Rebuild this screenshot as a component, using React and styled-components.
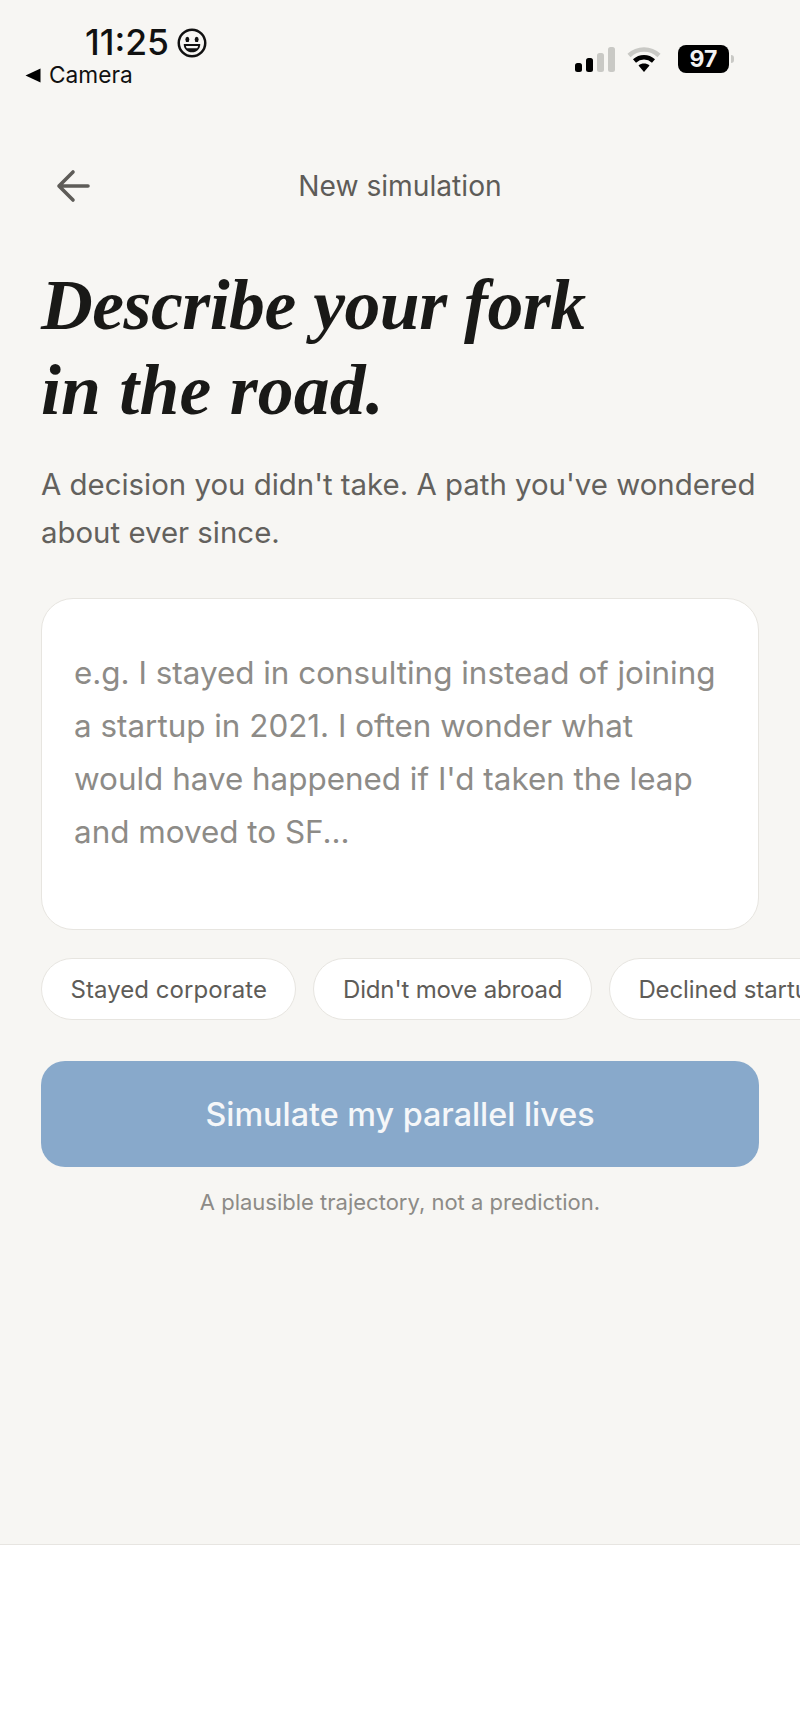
import React from "react";
import styled, { createGlobalStyle } from "styled-components";

const Global = createGlobalStyle`
  html, body { margin: 0; padding: 0; background: #fff; }
  * { box-sizing: border-box; }
`;
const SANS = `"Inter", "Liberation Sans", sans-serif`;

const Page = styled.div`
  width: 800px; height: 1734px; overflow: hidden;
  display: flex; flex-direction: column;
  font-family: ${SANS};
`;
const Screen = styled.main`
  height: 1545px; background: #f7f6f3;
  border-bottom: 1px solid #e7e5e1;
  display: flex; flex-direction: column;
`;
const Footer = styled.div`flex: 1; background: #fff;`;

const StatusBar = styled.header`
  height: 151px; padding: 26px 71px 0 25px;
  display: flex; justify-content: space-between; align-items: flex-start;
`;
const StatusLeft = styled.div`display: flex; flex-direction: column;`;
const TimeRow = styled.div`
  display: flex; align-items: center; gap: 8px; padding-left: 60px; height: 34px;
`;
const Time = styled.span`font-size: 35.5px; font-weight: 500; color: #111; line-height: 34px;`;
const BackRow = styled.div`
  display: flex; align-items: center; gap: 8px; height: 26px; margin-top: 2px;
`;
const BackLabel = styled.span`font-size: 22.7px; font-weight: 400; color: #111; line-height: 26px;`;
const StatusRight = styled.div`
  display: flex; align-items: center; gap: 10px; margin-top: 19px;
`;
const Battery = styled.div`
  width: 51px; height: 28px; margin-left: 7px; border-radius: 8px; background: #000; color: #f2f2f2;
  font-size: 23px; font-weight: 700; display: flex; align-items: center; justify-content: center;
  position: relative;
  &::after { content: ""; position: absolute; right: -5px; top: 10px; width: 3px; height: 8px;
    border-radius: 0 3px 3px 0; background: #c9c9c5; }
`;

const NavBar = styled.nav`
  height: 70px; position: relative; display: flex; align-items: center; justify-content: center;
`;
const NavButton = styled.button`
  position: absolute; left: 53px; top: 15px; padding: 0; border: 0; background: none;
  width: 40px; height: 40px; display: flex; align-items: center; justify-content: center;
`;
const NavTitle = styled.h2`
  margin: 0; font-size: 28.2px; font-weight: 400; color: #5e5c58;
`;

const Body = styled.section`
  padding: 42px 41px 0; display: flex; flex-direction: column;
`;
const Headline = styled.h1`
  margin: 0; font-family: "Liberation Serif", serif; font-style: italic; font-weight: 700;
  font-size: 71.7px; line-height: 85px; color: #191917; letter-spacing: -0.5px;
`;
const HeadlineLine = styled.span`
  display: block; letter-spacing: ${(p) => p.$tracking};
`;
const Lead = styled.p`
  margin: 28px 0 0; font-size: 29.4px; line-height: 48px; color: #63615d;
`;
const Card = styled.div`
  margin-top: 41px; height: 332px; background: #fff; border: 1px solid #e7e5e0; border-radius: 32px;
  padding: 48px 32px; font-size: 31.4px; line-height: 53px; color: #8d8b87;
`;
const ChipRow = styled.div`
  display: flex; gap: 17px; margin-top: 28px; margin-right: -41px; overflow: hidden;
`;
const Chip = styled.div`
  flex: none; height: 62px; padding: 0 28.5px; border-radius: 31px; background: #fff;
  border: 1px solid #e7e5e0; display: flex; align-items: center;
  font-size: 24px; color: #5e5c58; white-space: nowrap;
  letter-spacing: ${(p) => p.$tracking || "0"};
`;
const Cta = styled.button`
  margin-top: 41px; height: 106px; border: 0; border-radius: 24px; background: #88a9cb;
  color: #f5f7f9; font-family: ${SANS}; font-size: 32.3px; font-weight: 500;
`;
const Caption = styled.p`
  margin: 21px 0 0; text-align: center; font-size: 22px; line-height: 28px; color: #8d8b87;
`;

const Smiley = () => (
  <svg width="30" height="30" viewBox="0 0 29 29" fill="none">
    <circle cx="14.5" cy="14.5" r="12.8" stroke="#111" strokeWidth="2.4" />
    <ellipse cx="10" cy="11" rx="1.9" ry="2.6" fill="#111" />
    <ellipse cx="19" cy="11" rx="1.9" ry="2.6" fill="#111" />
    <path d="M6.5 15.5h16c0 4.8-3.4 8-8 8s-8-3.2-8-8z" fill="#111" />
    <path d="M8.6 17.3h11.8c-.3 1.2-.6 1.8-1 2.3H9.6c-.4-.5-.8-1.1-1-2.3z" fill="#f7f6f3" />
  </svg>
);
const BackTriangle = () => (
  <svg width="16" height="15" viewBox="0 0 16 15"><path d="M0.5 7.5L15.5 0.5v14z" fill="#000" /></svg>
);
const Signal = () => (
  <svg width="42" height="28" viewBox="0 0 42 28">
    <rect x="0" y="18" width="7" height="9" rx="2.5" fill="#000" />
    <rect x="11" y="13" width="7" height="14" rx="2.5" fill="#000" />
    <rect x="22" y="8" width="7" height="19" rx="2.5" fill="#c9c9c5" />
    <rect x="33" y="2" width="7" height="25" rx="2.5" fill="#c9c9c5" />
  </svg>
);
const Wifi = () => (
  <svg width="34" height="27" viewBox="0 0 34 27" fill="none">
    <path d="M2 9.5C10.5 1.5 23.5 1.5 32 9.5" stroke="#c9c9c5" strokeWidth="4.5" />
    <path d="M7.5 15C13 10 21 10 26.5 15" stroke="#000" strokeWidth="4.5" />
    <path d="M11.5 19.5L17 26l5.5-6.5c-3.2-2.6-7.8-2.6-11 0z" fill="#000" />
  </svg>
);
const ArrowLeft = () => (
  <svg width="34" height="34" viewBox="0 0 34 34" fill="none" stroke="#5e5c58" strokeWidth="3.6" strokeLinecap="round" strokeLinejoin="round">
    <path d="M32 17H3M17 3L3 17l14 14" />
  </svg>
);

export default function App() {
  return (
    <Page>
      <Global />
      <Screen>
        <StatusBar>
          <StatusLeft>
            <TimeRow>
              <Time>11:25</Time>
              <Smiley />
            </TimeRow>
            <BackRow>
              <BackTriangle />
              <BackLabel>Camera</BackLabel>
            </BackRow>
          </StatusLeft>
          <StatusRight>
            <Signal />
            <Wifi />
            <Battery>97</Battery>
          </StatusRight>
        </StatusBar>
        <NavBar>
          <NavButton aria-label="Back"><ArrowLeft /></NavButton>
          <NavTitle>New simulation</NavTitle>
        </NavBar>
        <Body>
          <Headline>
            <HeadlineLine $tracking="-0.5px">Describe your fork</HeadlineLine>
            <HeadlineLine $tracking="0.2px">in the road.</HeadlineLine>
          </Headline>
          <Lead>A decision you didn't take. A path you've wondered about ever since.</Lead>
          <Card>
            e.g. I stayed in consulting instead of joining a startup in 2021. I often wonder what would have happened if I'd taken the leap and moved to SF...
          </Card>
          <ChipRow>
            <Chip $tracking="0.05px">Stayed corporate</Chip>
            <Chip $tracking="-0.15px">Didn't move abroad</Chip>
            <Chip $tracking="-0.1px">Declined startup offer</Chip>
          </ChipRow>
          <Cta>Simulate my parallel lives</Cta>
          <Caption>A plausible trajectory, not a prediction.</Caption>
        </Body>
      </Screen>
      <Footer />
    </Page>
  );
}
